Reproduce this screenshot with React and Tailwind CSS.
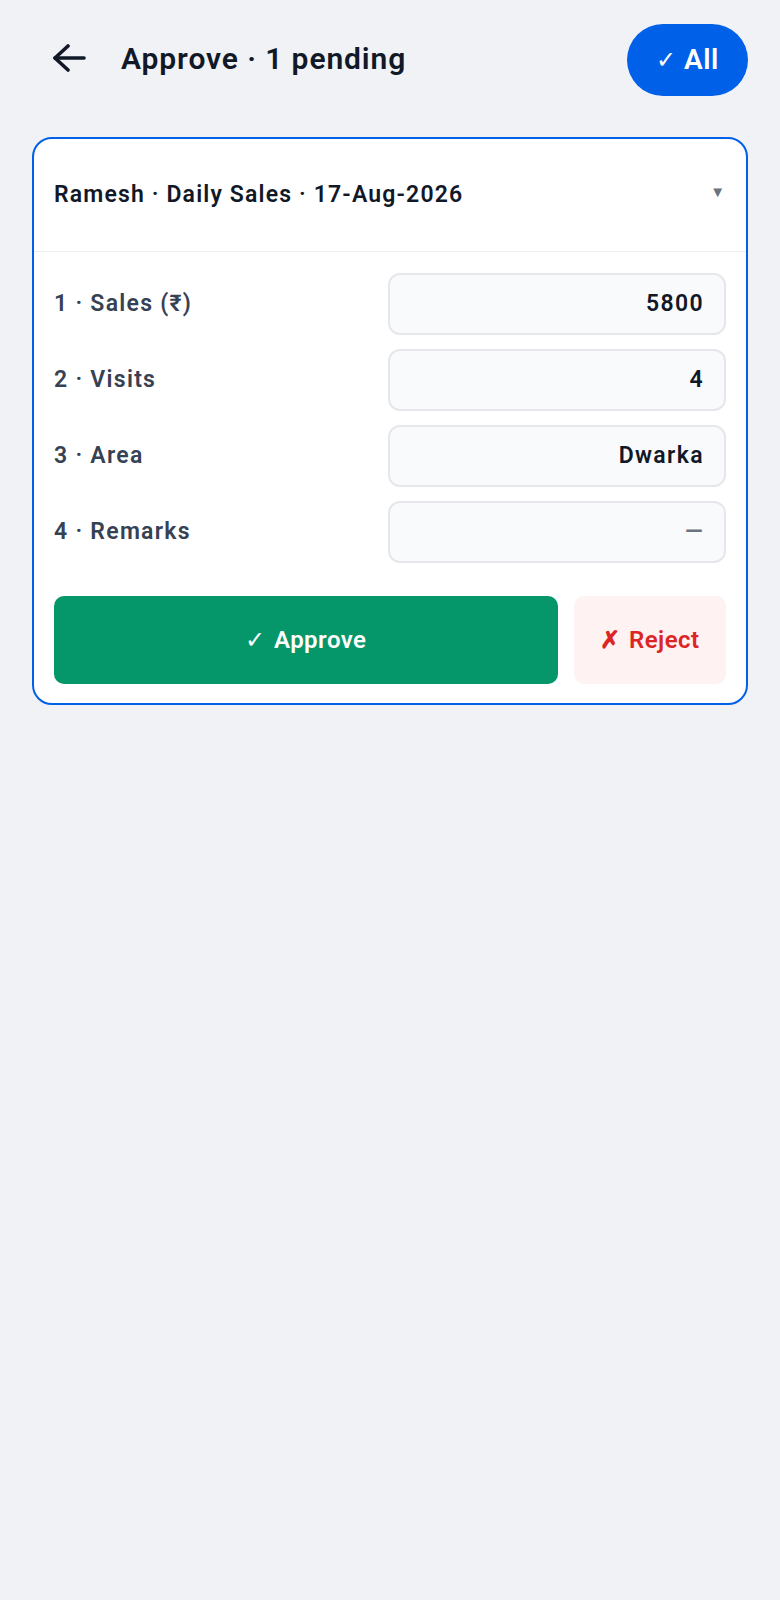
const rows = [
  { label: "1 · Sales (₹)", value: "5800" },
  { label: "2 · Visits", value: "4" },
  { label: "3 · Area", value: "Dwarka" },
  { label: "4 · Remarks", value: null },
];

function BackArrow() {
  return (
    <svg width="34" height="28" viewBox="0 0 34 28" fill="none" stroke="#111827" strokeWidth="3.6" strokeLinecap="round" strokeLinejoin="round">
      <path d="M16 2 3 14l13 12" />
      <path d="M3 14h29" />
    </svg>
  );
}

export default function App() {
  return (
    <div className="min-h-[1600px] bg-[#f0f2f5] px-8 pt-6" style={{ fontFamily: "Roboto, 'Noto Sans', sans-serif" }}>
      <div className="flex items-center h-[72px]">
        <button className="pl-5 flex items-center -mt-1">
          <BackArrow />
        </button>
        <h1 className="ml-[35px] -mt-1 text-[30px] font-semibold tracking-[0.03em] text-[#111827]">Approve · 1 pending</h1>
        <button className="ml-auto h-[72px] w-[121px] rounded-full bg-[#0060e8] text-white text-[28px] font-semibold flex items-center justify-center gap-2">
          <span className="font-normal text-[24px]">✓</span>
          <span className="tracking-[0.02em]">All</span>
        </button>
      </div>

      <div className="mt-[41px] rounded-[20px] border-2 border-[#0060e8] bg-white overflow-hidden">
        <div className="flex items-center px-5 pt-[41px] pb-[41px]">
          <div className="text-[23px] leading-[30px] font-semibold tracking-[0.05em] text-[#111827]">Ramesh · Daily Sales · 17-Aug-2026</div>
          <span className="ml-auto -mt-[5px] mr-[1px] text-[15px] text-[#6b7280]">▼</span>
        </div>
        <div className="h-px bg-[#edf0f3]" />
        <div className="px-5 pt-[21px] pb-[19px]">
          <div className="flex flex-col gap-[14px]">
            {rows.map((r) => (
              <div key={r.label} className="flex items-center">
                <div className="flex-1 text-[23px] font-semibold tracking-[0.055em] text-[#364153]">{r.label}</div>
                <div className="w-[338px] h-[62px] rounded-xl border-2 border-[#e5e7eb] bg-[#f9fafb] px-5 flex items-center justify-end text-[23px] font-semibold tracking-[0.06em]">
                  {r.value ? (
                    <span className="text-[#111827]">{r.value}</span>
                  ) : (
                    <span className="text-[#6b7280]">—</span>
                  )}
                </div>
              </div>
            ))}
          </div>
          <div className="mt-[33px] flex gap-4">
            <button className="flex-1 h-[88px] rounded-[10px] bg-[#059669] text-white text-[24px] font-semibold tracking-[0.02em] flex items-center justify-center gap-2">
              <span className="font-normal">✓</span>
              <span>Approve</span>
            </button>
            <button className="h-[88px] w-[152px] rounded-[10px] bg-[#fef2f2] text-[#dc2626] text-[24px] font-semibold tracking-[0.02em] flex items-center justify-center gap-2">
              <span>✗</span>
              <span>Reject</span>
            </button>
          </div>
        </div>
      </div>
    </div>
  );
}
